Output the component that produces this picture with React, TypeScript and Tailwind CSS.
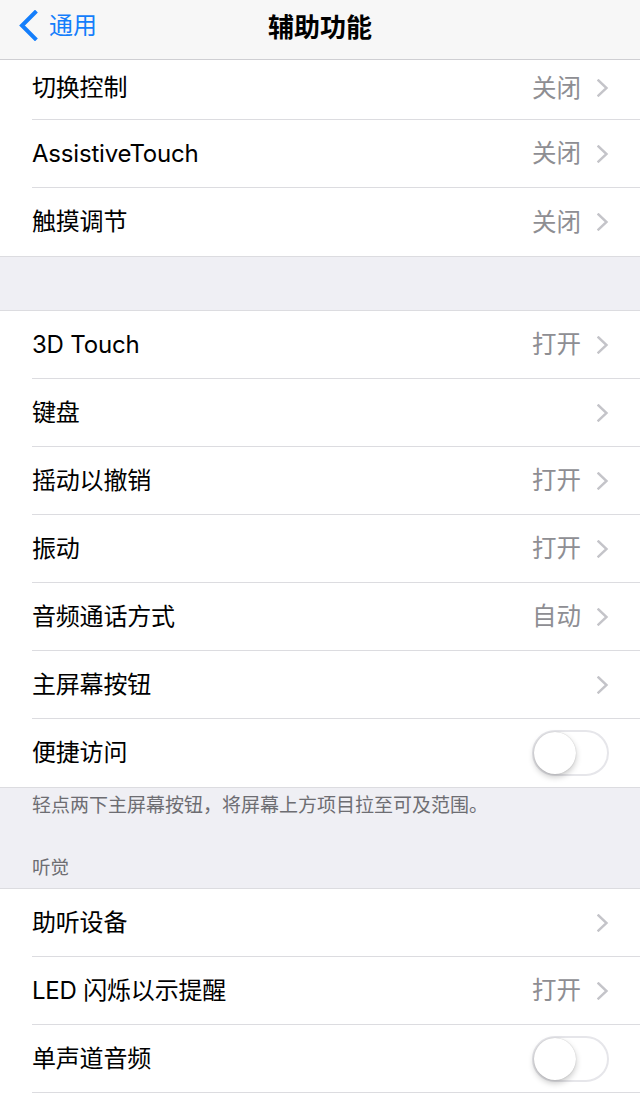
type Row = { label: string; value?: string; toggle?: boolean }

const sectionOne: Row[] = [
    { label: '切换控制', value: '关闭' },
    { label: 'AssistiveTouch', value: '关闭' },
    { label: '触摸调节', value: '关闭' },
]

const sectionTwo: Row[] = [
    { label: '3D Touch', value: '打开' },
    { label: '键盘' },
    { label: '摇动以撤销', value: '打开' },
    { label: '振动', value: '打开' },
    { label: '音频通话方式', value: '自动' },
    { label: '主屏幕按钮' },
    { label: '便捷访问', toggle: true },
]

const hearing: Row[] = [
    { label: '助听设备' },
    { label: 'LED 闪烁以示提醒', value: '打开' },
    { label: '单声道音频', toggle: true },
]

const Chevron = () => (
    <svg width="12" height="18" viewBox="0 0 12 18" className="text-[#c4c4c9]">
        <polyline points="1.5,1.5 9.5,9 1.5,16.5" fill="none" stroke="currentColor" strokeWidth="2.4" strokeLinecap="square" />
    </svg>
)

const BackChevron = () => (
    <svg width="20" height="31" viewBox="0 0 20 31">
        <polyline points="17,2.5 4,15.5 17,28.5" fill="none" stroke="currentColor" strokeWidth="4" strokeLinecap="square" />
    </svg>
)

const Toggle = () => (
    <div className="w-[77px] h-[46px] rounded-full border-2 border-[#e6e6ea] bg-white relative">
        <div className="absolute left-0 top-0 w-[42px] h-[42px] rounded-full bg-white shadow-[0_3px_6px_rgba(0,0,0,0.22),0_0_1px_rgba(0,0,0,0.25)]" />
    </div>
)

const ListRow = ({ row, last, first }: { row: Row; last: boolean; first?: boolean }) => (
    <div className={`pl-[32px] ${first ? 'h-[60px]' : 'h-[68px]'} flex`}>
        <div className={`flex-1 flex items-center pr-[31px] ${first ? 'pb-[3px]' : ''} ${last ? '' : 'border-b border-[#dcdce0]'}`}>
            <span className="flex-1 text-[24px] text-black tracking-[-0.2px]">{row.label}</span>
            {row.toggle ? (
                <Toggle />
            ) : (
                <div className="flex items-center">
                    {row.value && <span className="text-[24.5px] text-[#8e8e93] mr-[16px]">{row.value}</span>}
                    <Chevron />
                </div>
            )}
        </div>
    </div>
)

export default function App() {
    return (
        <div
            className="w-[640px] h-[1099px] overflow-hidden bg-[#efeff4]"
            style={{ fontFamily: 'Inter, "Noto Sans CJK SC", sans-serif' }}
        >
            <div className="h-[60px] bg-[#f7f7f7] border-b border-[#cfcfd3] flex items-center pb-[8px] relative">
                <div className="flex items-center pl-[18px] text-[#147efb]">
                    <BackChevron />
                    <span className="text-[24px] ml-[11px]">通用</span>
                </div>
                <span className="absolute left-0 right-0 top-[8px] text-center text-[26px] font-semibold text-black pointer-events-none">
                    辅助功能
                </span>
            </div>

            <div className="bg-white border-b border-[#dcdce0]">
                {sectionOne.map((r, i) => (
                    <ListRow key={r.label} row={r} first={i === 0} last={i === sectionOne.length - 1} />
                ))}
            </div>

            <div className="h-[53px]" />

            <div className="bg-white border-y border-[#dcdce0]">
                {sectionTwo.map((r, i) => (
                    <ListRow key={r.label} row={r} last={i === sectionTwo.length - 1} />
                ))}
            </div>

            <div className="h-[100px] px-[32px] pt-[5px] text-[#6d6d72]">
                <p className="text-[19px] leading-[26px]">轻点两下主屏幕按钮，将屏幕上方项目拉至可及范围。</p>
                <p className="text-[18.5px] leading-[26px] mt-[35px]">听觉</p>
            </div>

            <div className="bg-white border-t border-[#dcdce0]">
                {hearing.map((r) => (
                    <ListRow key={r.label} row={r} last={false} />
                ))}
                <div className="h-[68px]" />
            </div>
        </div>
    )
}
